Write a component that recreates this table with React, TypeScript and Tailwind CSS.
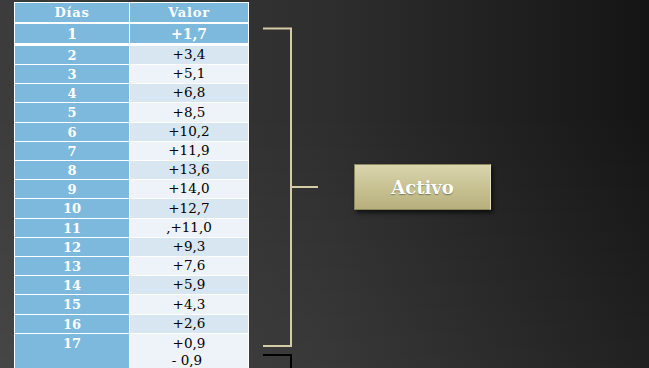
import React from "react";

const rows: { day: string; value: string; tall?: boolean }[] = [
  { day: "2", value: "+3,4" },
  { day: "3", value: "+5,1" },
  { day: "4", value: "+6,8" },
  { day: "5", value: "+8,5", tall: true },
  { day: "6", value: "+10,2" },
  { day: "7", value: "+11,9" },
  { day: "8", value: "+13,6" },
  { day: "9", value: "+14,0" },
  { day: "10", value: "+12,7", tall: true },
  { day: "11", value: ",+11,0" },
  { day: "12", value: "+9,3" },
  { day: "13", value: "+7,6" },
  { day: "14", value: "+5,9" },
  { day: "15", value: "+4,3", tall: true },
  { day: "16", value: "+2,6" },
];

const serif = "font-['DejaVu_Serif','Liberation_Serif',serif]";

export default function App() {
  return (
    <div
      className={`flex h-[368px] w-[649px] overflow-hidden bg-[linear-gradient(to_top,rgba(255,255,255,0.05),rgba(255,255,255,0)_70%),linear-gradient(to_right,#3c3c3c,#2e2e2e_50%,#151515)] ${serif}`}
    >
      {/* table */}
      <div className="ml-[14px] mt-[2px] flex w-[235px] shrink-0 flex-col bg-white px-[1px] pt-[1px] leading-none">
        <div className="grid h-[19px] shrink-0 grid-cols-[114px_1fr] grid-rows-1 gap-[1px] text-[13px] font-bold tracking-[0.06em] text-white">
          <div className="flex items-center justify-center bg-[#7cb9dd]">Días</div>
          <div className="flex items-center justify-center bg-[#7cb9dd]">Valor</div>
        </div>
        <div className="mt-[2px] grid h-[19px] shrink-0 grid-cols-[114px_1fr] grid-rows-1 gap-[1px] text-[14px] font-bold text-white">
          <div className="flex items-center justify-center bg-[#7cb9dd]">1</div>
          <div className="flex items-center justify-center bg-[#7cb9dd]">+1,7</div>
        </div>
        <div className="mt-[3px] flex shrink-0 flex-col gap-[1px]">
          {rows.map((r, i) => (
            <div
              key={r.day}
              className={`grid shrink-0 grid-cols-[114px_1fr] grid-rows-1 gap-x-[1px] ${r.tall ? "h-[19px]" : "h-[18px]"}`}
            >
              <div className="flex items-center justify-center bg-[#7cb9dd] text-[13px] font-bold text-white">
                {r.day}
              </div>
              <div
                className={`flex items-center justify-center text-[13.5px] text-black ${
                  i % 2 === 0 ? "bg-[#d8e6f2]" : "bg-[#edf3f9]"
                }`}
              >
                {r.value}
              </div>
            </div>
          ))}
          <div className="grid h-[40px] shrink-0 grid-cols-[114px_1fr] grid-rows-1 gap-x-[1px]">
            <div className="flex justify-center bg-[#7cb9dd] pt-[3px] text-[13px] font-bold text-white">17</div>
            <div className="flex flex-col items-center bg-[#edf3f9] pt-[1px] text-[13.5px] leading-[17px] text-black">
              <span>+0,9</span>
              <span className="pr-[4px]">- 0,9</span>
            </div>
          </div>
        </div>
      </div>

      {/* bracket */}
      <svg className="ml-[14px] shrink-0" width="60" height="368" viewBox="0 0 60 368">
        <path d="M0 28.5 H28 V346 H0" fill="none" stroke="#d3cca6" strokeWidth="2" />
        <path d="M28 187 H55" fill="none" stroke="#d3cca6" strokeWidth="2" />
        <path d="M0 355 H28 V368" fill="none" stroke="#000000" strokeWidth="2" />
      </svg>

      {/* node */}
      <div className="ml-[31px] mt-[164px] flex h-[46px] w-[137px] shrink-0 items-center justify-center border border-[#8c875d] border-r-[#e4dfba] bg-[linear-gradient(to_bottom,#d9d5ad,#c6c091_55%,#b7af7c)] shadow-[2px_3px_4px_rgba(0,0,0,0.6)]">
        <span className="text-[18px] font-bold text-white [text-shadow:0_1px_1px_rgba(0,0,0,0.35)]">Activo</span>
      </div>
    </div>
  );
}
